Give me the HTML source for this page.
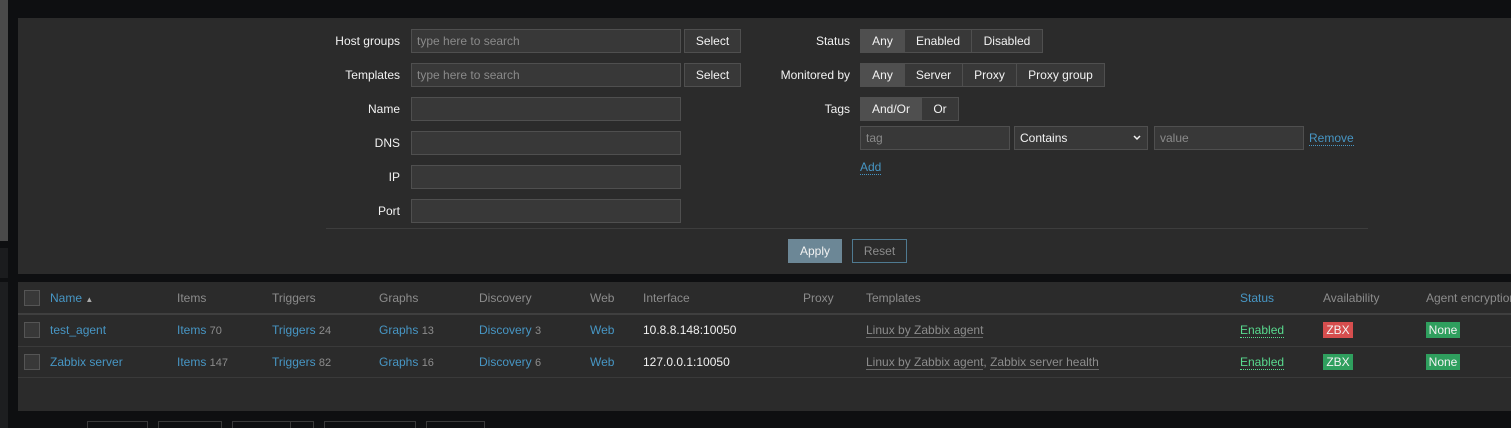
<html><head><style>
html,body{margin:0;width:1511px;height:428px;overflow:hidden}
body{background:#0e0f11;font-family:"Liberation Sans",sans-serif;font-size:12px;color:#f2f2f2;position:relative}
div,span{position:absolute;box-sizing:border-box}
.lbl{text-align:right;width:200px;line-height:24px}
.in{background:#383838;border:1px solid #4f4f4f;height:24px;line-height:22px;padding-left:5px;color:#8a8a8a}
.btn{border:1px solid #4f4f4f;background:#383838;height:24px;line-height:22px;text-align:center;color:#f2f2f2}
.act{background:#4f4f4f}
.lk{color:#4796c4}
.g{color:#8c8c8c;font-size:11px}
.h{color:#8c8c8c;top:291px}
.cb{width:16px;height:16px;border:1px solid #555;background:#383838;left:24px}
.t{color:#8c8c8c;border-bottom:1px solid #6a6a6a}
.ln{left:18px;width:1493px;height:1px;background:#3a3a3a}
</style></head><body>
<div style="left:0;top:0;width:8px;height:241px;background:#4a4a4a"></div>
<div style="left:0;top:248px;width:8px;height:30px;background:#1b1c1e"></div>
<div style="left:0;top:282px;width:8px;height:146px;background:#1d1e20"></div>
<div style="left:18px;top:18px;width:1493px;height:256px;background:#2b2b2b"></div>
<div class="lbl" style="left:200px;top:29px">Host groups</div>
<div class="lbl" style="left:200px;top:63px">Templates</div>
<div class="lbl" style="left:200px;top:97px">Name</div>
<div class="lbl" style="left:200px;top:131px">DNS</div>
<div class="lbl" style="left:200px;top:165px">IP</div>
<div class="lbl" style="left:200px;top:199px">Port</div>
<div class="in" style="left:411px;top:29px;width:270px">type here to search</div>
<div class="in" style="left:411px;top:63px;width:270px">type here to search</div>
<div class="in" style="left:411px;top:97px;width:270px"></div>
<div class="in" style="left:411px;top:131px;width:270px"></div>
<div class="in" style="left:411px;top:165px;width:270px"></div>
<div class="in" style="left:411px;top:199px;width:270px"></div>
<div class="btn" style="left:684px;top:29px;width:57px">Select</div>
<div class="btn" style="left:684px;top:63px;width:57px">Select</div>
<div class="lbl" style="left:650px;top:29px">Status</div>
<div class="lbl" style="left:650px;top:63px">Monitored by</div>
<div class="lbl" style="left:650px;top:97px">Tags</div>
<div class="btn act" style="left:860px;top:29px;width:45px">Any</div>
<div class="btn" style="left:904px;top:29px;width:68px">Enabled</div>
<div class="btn" style="left:971px;top:29px;width:72px">Disabled</div>
<div class="btn act" style="left:860px;top:63px;width:45px">Any</div>
<div class="btn" style="left:904px;top:63px;width:59px">Server</div>
<div class="btn" style="left:962px;top:63px;width:55px">Proxy</div>
<div class="btn" style="left:1016px;top:63px;width:89px">Proxy group</div>
<div class="btn act" style="left:860px;top:97px;width:62px">And/Or</div>
<div class="btn" style="left:921px;top:97px;width:38px">Or</div>
<div class="in" style="left:860px;top:126px;width:150px">tag</div>
<div class="in" style="left:1014px;top:126px;width:134px;color:#f2f2f2">Contains<svg style="position:absolute;right:6px;top:8px" width="8" height="6"><path d="M1 1L4 4L7 1" stroke="#f2f2f2" stroke-width="1.5" fill="none"/></svg></div>
<div class="in" style="left:1154px;top:126px;width:150px">value</div>
<div class="lk" style="left:1309px;top:131px;border-bottom:1px dotted #4796c4">Remove</div>
<div class="lk" style="left:860px;top:160px;border-bottom:1px dotted #4796c4">Add</div>
<div style="left:326px;top:228px;width:1042px;height:1px;background:#3d3d3d"></div>
<div class="btn" style="left:788px;top:239px;width:54px;background:#6c8796;border-color:#6c8796">Apply</div>
<div class="btn" style="left:852px;top:239px;width:55px;background:transparent;border-color:#4f7a91;color:#8c8c8c">Reset</div>

<div style="left:18px;top:282px;width:1493px;height:129px;background:#2b2b2b"></div>
<div class="cb" style="top:290px"></div>
<div class="lk" style="left:50px;top:291px">Name <span style="position:static;font-size:8px;color:#aaa">&#9650;</span></div>
<div class="h" style="left:177px">Items</div>
<div class="h" style="left:272px">Triggers</div>
<div class="h" style="left:379px">Graphs</div>
<div class="h" style="left:479px">Discovery</div>
<div class="h" style="left:590px">Web</div>
<div class="h" style="left:643px">Interface</div>
<div class="h" style="left:803px">Proxy</div>
<div class="h" style="left:866px">Templates</div>
<div class="lk" style="left:1240px;top:291px">Status</div>
<div class="h" style="left:1323px">Availability</div>
<div class="h" style="left:1426px;white-space:nowrap">Agent encryption</div>
<div class="ln" style="top:313px;height:2px;background:#3f3f3f"></div>
<div class="ln" style="top:346px"></div>
<div class="ln" style="top:377px"></div>

<div class="cb" style="top:322px"></div>
<div class="lk" style="left:50px;top:323px">test_agent</div>
<div class="lk" style="left:177px;top:323px">Items <span class="g" style="position:static">70</span></div>
<div class="lk" style="left:272px;top:323px">Triggers <span class="g" style="position:static">24</span></div>
<div class="lk" style="left:379px;top:323px">Graphs <span class="g" style="position:static">13</span></div>
<div class="lk" style="left:479px;top:323px">Discovery <span class="g" style="position:static">3</span></div>
<div class="lk" style="left:590px;top:323px">Web</div>
<div style="left:643px;top:323px">10.8.8.148:10050</div>
<div style="left:866px;top:323px"><span class="t" style="position:static">Linux by Zabbix agent</span></div>
<div style="left:1240px;top:323px;color:#59db8f;border-bottom:1px dotted #59db8f">Enabled</div>
<div style="left:1323px;top:322px;width:30px;height:16px;background:#d64e4e;text-align:center;line-height:16px">ZBX</div>
<div style="left:1426px;top:322px;width:34px;height:16px;background:#2f9f5e;text-align:center;line-height:16px">None</div>

<div class="cb" style="top:354px"></div>
<div class="lk" style="left:50px;top:355px">Zabbix server</div>
<div class="lk" style="left:177px;top:355px">Items <span class="g" style="position:static">147</span></div>
<div class="lk" style="left:272px;top:355px">Triggers <span class="g" style="position:static">82</span></div>
<div class="lk" style="left:379px;top:355px">Graphs <span class="g" style="position:static">16</span></div>
<div class="lk" style="left:479px;top:355px">Discovery <span class="g" style="position:static">6</span></div>
<div class="lk" style="left:590px;top:355px">Web</div>
<div style="left:643px;top:355px">127.0.0.1:10050</div>
<div style="left:866px;top:355px;color:#8c8c8c"><span class="t" style="position:static">Linux by Zabbix agent</span>, <span class="t" style="position:static">Zabbix server health</span></div>
<div style="left:1240px;top:355px;color:#59db8f;border-bottom:1px dotted #59db8f">Enabled</div>
<div style="left:1323px;top:354px;width:30px;height:16px;background:#2f9f5e;text-align:center;line-height:16px">ZBX</div>
<div style="left:1426px;top:354px;width:34px;height:16px;background:#2f9f5e;text-align:center;line-height:16px">None</div>

<div style="left:87px;top:421px;width:61px;height:7px;border:1px solid #3a3a3a;border-bottom:0"></div>
<div style="left:158px;top:421px;width:64px;height:7px;border:1px solid #3a3a3a;border-bottom:0"></div>
<div style="left:232px;top:421px;width:82px;height:7px;border:1px solid #3a3a3a;border-bottom:0"></div>
<div style="left:290px;top:421px;width:1px;height:7px;background:#3a3a3a"></div>
<div style="left:324px;top:421px;width:92px;height:7px;border:1px solid #3a3a3a;border-bottom:0"></div>
<div style="left:426px;top:421px;width:59px;height:7px;border:1px solid #3a3a3a;border-bottom:0"></div>
</body></html>
